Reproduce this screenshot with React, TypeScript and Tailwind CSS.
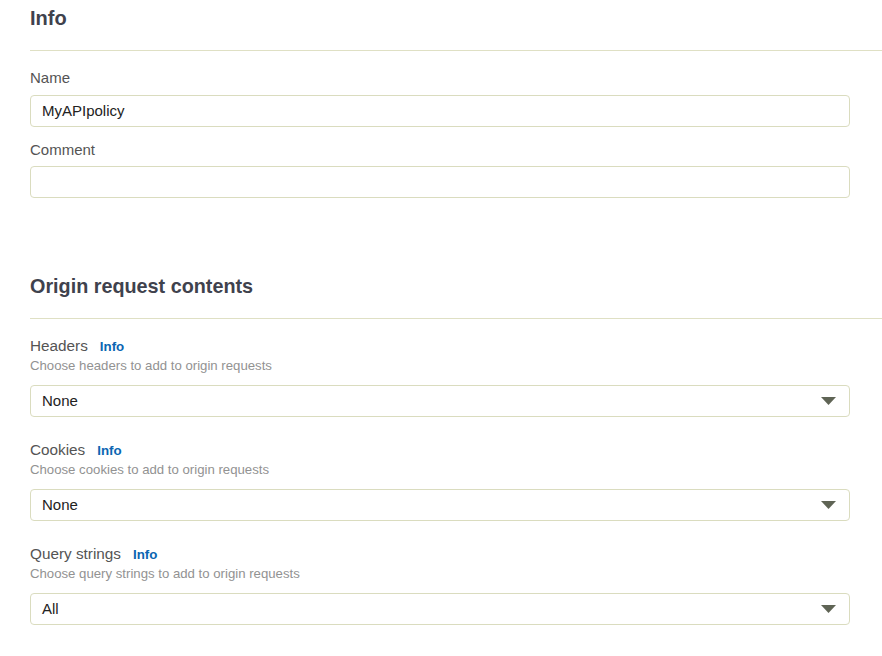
import React, { FC } from "react";

const font = { fontFamily: '"Liberation Sans", Arial, sans-serif' };

const Divider: FC<{ className?: string }> = ({ className = "" }) => (
  <div className={`h-px bg-[#dfe0c4] ${className}`} />
);

const TextInput: FC<{ value?: string; className?: string }> = ({ value = "", className = "" }) => (
  <div
    className={`w-[820px] h-[32px] rounded-[4px] border border-[#dadcbf] bg-white flex items-center px-[11px] text-[15px] text-[#222] ${className}`}
  >
    {value}
  </div>
);

const SelectBox: FC<{ value: string }> = ({ value }) => (
  <div className="mt-[11px] w-[820px] h-[32px] rounded-[4px] border border-[#dadcbf] bg-white flex items-center justify-between pl-[11px] pr-[13px] text-[15px] text-[#222]">
    <span>{value}</span>
    <svg width="15" height="8" viewBox="0 0 15 8">
      <path d="M0 0 L15 0 L7.5 8 Z" fill="#5f6455" />
    </svg>
  </div>
);

const Field: FC<{ label: string; desc: string; value: string; first?: boolean }> = ({
  label,
  desc,
  value,
  first,
}) => (
  <div className={first ? "mt-[17px]" : "mt-[23px]"}>
    <div className="flex items-baseline leading-[20px]">
      <span className="text-[15.3px] text-[#545454]">{label}</span>
      <span className="ml-[12px] text-[13.3px] font-bold text-[#0b66b2]">Info</span>
    </div>
    <div className="mt-[1px] text-[13.2px] leading-[16px] text-[#929292]">{desc}</div>
    <SelectBox value={value} />
  </div>
);

export default function App() {
  return (
    <div className="w-[882px] h-[656px] bg-white pl-[30px] overflow-hidden" style={font}>
      <h2 className="pt-[4px] text-[20px] leading-[28px] font-bold text-[#3f424d]">Info</h2>
      <Divider className="mt-[18px]" />

      <div className="mt-[17px] text-[15px] leading-[20px] text-[#545454]">Name</div>
      <TextInput value="MyAPIpolicy" className="mt-[7px]" />
      <div className="mt-[13px] text-[15px] leading-[20px] text-[#545454]">Comment</div>
      <TextInput className="mt-[6px]" />

      <h2 className="mt-[74px] text-[19.8px] leading-[28px] font-bold text-[#3f424d]">
        Origin request contents
      </h2>
      <Divider className="mt-[18px]" />

      <Field first label="Headers" desc="Choose headers to add to origin requests" value="None" />
      <Field label="Cookies" desc="Choose cookies to add to origin requests" value="None" />
      <Field label="Query strings" desc="Choose query strings to add to origin requests" value="All" />
    </div>
  );
}
